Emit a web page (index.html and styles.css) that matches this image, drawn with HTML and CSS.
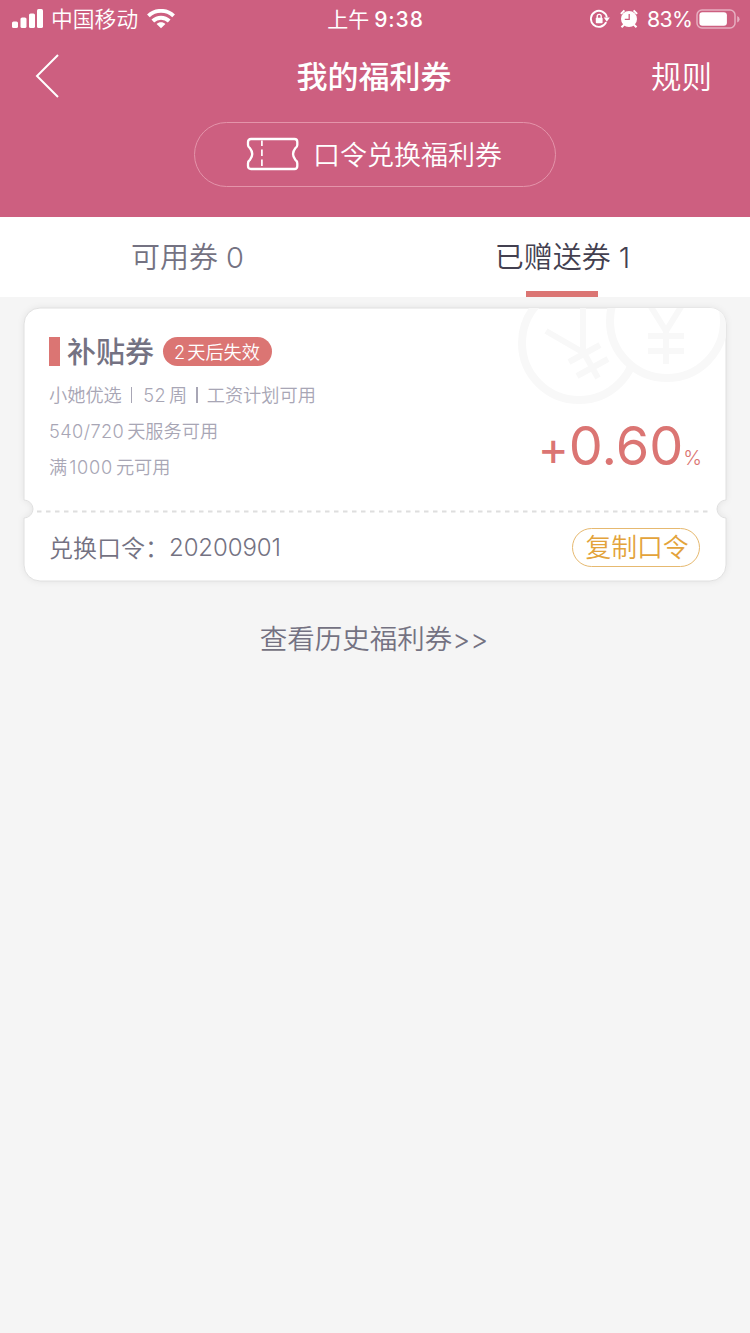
FILE: index.html
```html
<!DOCTYPE html>
<html lang="zh-CN">
<head>
<meta charset="utf-8">
<title>我的福利券</title>
<link rel="stylesheet" href="styles.css">
</head>
<body>
<header class="header">
  <div class="status">
    <div class="status-left">
      <svg width="31" height="20" viewBox="0 0 31 20" fill="#fff"><rect x="0" y="12.5" width="6" height="6.5" rx="1.6"/><rect x="8.5" y="8.5" width="6" height="10.5" rx="1.6"/><rect x="17" y="4.5" width="6" height="14.5" rx="1.6"/><rect x="25" y="0" width="6" height="19" rx="1.6"/></svg>
      <span class="carrier">中国移动</span>
      <svg width="28" height="20" viewBox="0 0 28 20" fill="none" stroke="#fff" stroke-width="3.9"><path d="M1.4 6.8C8.4.2 19.6.2 26.6 6.8"/><path d="M5.8 12C10.4 7.6 17.6 7.6 22.2 12"/><path d="M14 19.2l-4.4-4.2c2.3-2.2 6.5-2.2 8.8 0z" fill="#fff" stroke="none"/></svg>
    </div>
    <div class="clock"><span class="noon">上午</span><span class="time">9:38</span></div>
    <div class="status-right">
      <svg class="lock" width="20" height="20" viewBox="0 0 20 20" fill="none" stroke="#fff" stroke-width="1.9"><path d="M16.2 13.2A8 8 0 1 1 16.8 8.4"/><path d="M13.8 8.6h6l-3 4.2z" fill="#fff" stroke="none"/><rect x="5.8" y="8.8" width="6.8" height="5.4" rx=".8" fill="#fff" stroke="none"/><path d="M7.2 9.5V7.4a2 2 0 0 1 4 0v2.1" stroke-width="1.4"/></svg>
      <svg class="alarm" width="18" height="20" viewBox="0 0 18 20" fill="none" stroke="#fff" stroke-width="2"><circle cx="9" cy="10" r="8" fill="#fff" stroke="none"/><path d="M.9 4.9 4.4 1.4M17.1 4.9l-3.5-3.5M1.5 18.3l2.8-2.8M16.5 18.3l-2.8-2.8"/><path d="M9.2 5v5.3H4.8" stroke="#cd5f80" stroke-width="1.3"/></svg>
      <span class="percent">83%</span>
      <svg width="44" height="20" viewBox="0 0 44 20"><rect x="1" y="1" width="38" height="18" rx="5" fill="none" stroke="#e6afc0" stroke-width="1.5"/><rect x="3.4" y="3.2" width="27.5" height="13.6" rx="3" fill="#fff"/><path d="M41.2 7v6.4q2.4-1 2.4-3.2T41.2 7" fill="#e6afc0"/></svg>
    </div>
  </div>
  <nav class="nav">
    <svg width="26" height="46" viewBox="0 0 26 46" fill="none" stroke="#fff" stroke-width="2"><path d="M24 2 3 23 24 44"/></svg>
    <h1 class="title">我的福利券</h1>
    <span class="rules">规则</span>
  </nav>
  <div class="redeem">
    <svg width="54" height="34" viewBox="0 0 54 34" fill="none" stroke="#fff" stroke-width="2.3" stroke-linejoin="round"><path d="M5 2H48.5Q51.3 2 51.3 5V8Q51.3 10 49.3 11.3Q44.8 17 49.3 22.7Q51.3 24 51.3 26.5V29Q51.3 32 48.5 32H5Q2 32 2 29V26.5Q2 24 4 22.7Q8.5 17 4 11.3Q2 10 2 8V5Q2 2 5 2Z"/><path d="M15.9 3.5v28" stroke-width="1.7" stroke-dasharray="6.5 3.5" stroke-dashoffset="1"/></svg>
    <span>口令兑换福利券</span>
  </div>
</header>
<div class="tabs">
  <div class="tab">可用券 0</div>
  <div class="tab active">已赠送券 1</div>
</div>
<main class="main">
  <section class="coupon">
    <svg class="frame" width="726" height="290" viewBox="0 0 726 290">
      <defs><clipPath id="edge"><path d="M28 8H698A16 16 0 0 1 714 24V200A9 9 0 0 0 714 218V265A16 16 0 0 1 698 281H28A16 16 0 0 1 12 265V218A9 9 0 0 0 12 200V24A16 16 0 0 1 28 8Z"/></clipPath></defs>
      <path class="paper" d="M28 8H698A16 16 0 0 1 714 24V200A9 9 0 0 0 714 218V265A16 16 0 0 1 698 281H28A16 16 0 0 1 12 265V218A9 9 0 0 0 12 200V24A16 16 0 0 1 28 8Z"/>
      <g clip-path="url(#edge)" fill="none" stroke="#f8f8f8" stroke-width="8">
        <circle cx="567" cy="43" r="57"/>
        <circle cx="655" cy="21" r="57" fill="#fff"/>
        <path d="M636 2 654 31 672 2M654 29V64M636 36H672M636 51H672" stroke-width="6"/>
        <path d="M571 8V52M534 31 572 53 586 78M557 62 588 45M565 76 596 59" stroke-width="6"/>
      </g>
      <path d="M25 211.5H700" stroke="#dedede" stroke-width="2" stroke-dasharray="4.5 4.5"/>
    </svg>
    <div class="details">
      <div class="heading"><i class="mark"></i><h2 class="name">补贴券</h2><span class="expiry"><b>2</b>天后失效</span></div>
      <div class="terms">
        <p>小她优选<i class="bar first"></i><span class="num week">52</span>周<i class="bar"></i>工资计划可用</p>
        <p><span class="num">540/720</span>天服务可用</p>
        <p>满<span class="num thousand">1000</span>元可用</p>
      </div>
      <div class="rate"><span class="plus">+</span><span class="value">0.60</span><span class="unit">%</span></div>
    </div>
    <div class="code-row">
      <span class="label">兑换口令：</span><span class="code">20200901</span>
      <span class="copy">复制口令</span>
    </div>
  </section>
  <div class="history">查看历史福利券&gt;&gt;</div>
</main>
</body>
</html>
```
FILE: styles.css
```css
* { box-sizing: border-box; }
body { margin: 0; width: 750px; min-height: 1333px; background: #f5f5f5; color: #747282; font-family: Inter, "Noto Sans CJK SC", sans-serif; font-weight: 350; white-space: nowrap; }
svg { display: block; flex: none; }
h1, h2, p { margin: 0; }
.header { height: 217px; background: #cd5f80; color: #fff; }
.status { height: 38px; display: grid; grid-template-columns: 1fr auto 1fr; align-items: center; padding: 0 10px 0 12px; }
.status-left { display: flex; align-items: center; }
.carrier { margin: 0 9px 0 8px; font-size: 21.8px; line-height: 36px; }
.clock { display: flex; font-size: 21px; line-height: 37px; font-weight: 500; gap: 5px; margin-right: 1px; }
.noon { font-weight: 400; }
.time { letter-spacing: .9px; }
.status-right { display: flex; align-items: center; justify-content: flex-end; }
.lock { margin-right: 10px; }
.alarm { margin-right: 9px; }
.percent { width: 46px; font-size: 21.3px; letter-spacing: -.7px; font-weight: 400; margin-right: 3px; }
.nav { height: 76px; display: grid; grid-template-columns: 1fr auto 1fr; align-items: center; padding: 0 38px 0 34px; }
.title { font-size: 31px; font-weight: 500; line-height: 46px; padding: 1px 0 0 2px; }
.rules { font-size: 30.5px; text-align: right; line-height: 46px; padding-top: 1px; }
.redeem { width: 362px; height: 65px; margin: 8px 0 0 194px; border: 1px solid #e494aa; border-radius: 33px; display: flex; align-items: center; padding: 0 0 2px 51px; gap: 13px; font-size: 27px; }
.tabs { height: 80px; display: flex; background: #fff; font-size: 29px; line-height: 82px; text-align: center; }
.tab { flex: 1; position: relative; }
.active { color: #434050; }
.active::after { content: ""; position: absolute; left: 151px; top: 74px; width: 72px; height: 6px; background: #db7573; }
.main { padding: 3px 12px; }
.coupon { position: relative; height: 290px; padding: 8px 38px 0 37px; }
.frame { position: absolute; left: 0; top: 0; }
.paper { fill: #fff; stroke: #e0e0e0; stroke-width: 1; filter: drop-shadow(0 0 3px rgba(0,0,0,.07)); }
.details { position: relative; height: 203px; padding-top: 27px; }
.heading { display: flex; align-items: center; height: 32px; }
.mark { width: 11px; height: 29px; background: #db7573; }
.name { margin: 3px 9px 0 7px; font-size: 29px; line-height: 32px; font-weight: 500; }
.expiry { width: 109px; height: 29px; border-radius: 15px; background: #db7573; color: #fff; font-size: 18.2px; line-height: 30px; padding-left: 11px; }
.expiry b { font-weight: 350; margin-right: 2px; }
.terms { margin-top: 10px; font-size: 18.2px; line-height: 36px; color: #a8a6b5; }
.terms p { display: flex; align-items: center; height: 36.2px; }
.num { letter-spacing: .4px; margin-right: 3px; }
.thousand { margin-left: 2px; letter-spacing: .7px; }
.bar { width: 1.5px; height: 16px; background: #a8a6b5; margin: 0 9px; }
.first { margin: 0 11px 0 9px; }
.rate { position: absolute; right: -2px; top: 105px; display: flex; align-items: baseline; line-height: 66px; color: #db7573; }
.value { font-size: 54px; font-weight: 400; }
.plus { font-size: 47px; font-weight: 400; }
.unit { font-size: 20px; }
.code-row { position: relative; height: 71px; display: flex; align-items: center; font-size: 24px; }
.code { letter-spacing: -.1px; padding-top: 2px; }
.copy { margin: 1px 0 0 auto; width: 128px; height: 39px; border: 1px solid #e6b970; border-radius: 20px; color: #e3a33b; font-size: 25.8px; line-height: 38px; padding-left: 2px; text-align: center; }
.history { margin-top: 31px; font-size: 27.5px; line-height: 36px; padding-right: 2px; text-align: center; }
```
